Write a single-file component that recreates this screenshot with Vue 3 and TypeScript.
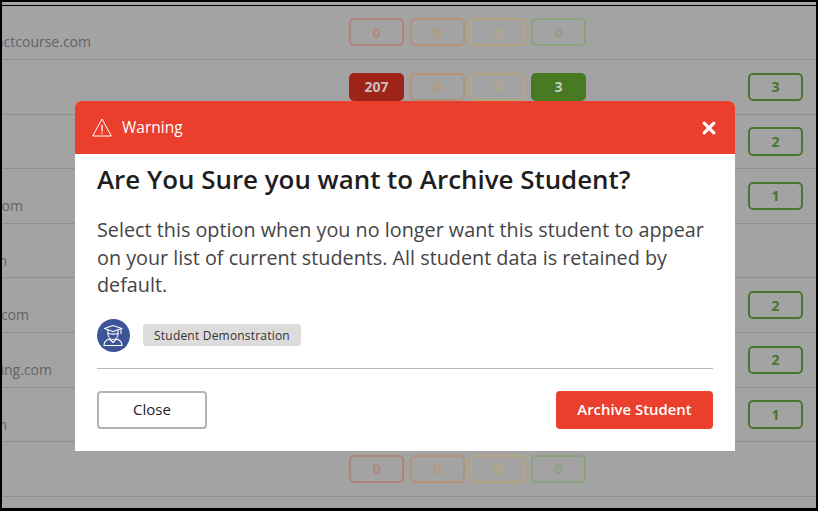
<script setup lang="ts">
interface Row {
  email: string
  emailEnd: number
  counts: number[]
  total: number | null
}

const COLUMN_RIGHT = 347

const rows: Row[] = [
  { email: 'student@exactcourse.com', emailEnd: 89, counts: [0, 0, 0, 0], total: null },
  { email: '', emailEnd: 0, counts: [207, 0, 0, 3], total: 3 },
  { email: '', emailEnd: 0, counts: [], total: 2 },
  { email: 'student@example.com', emailEnd: 21, counts: [], total: 1 },
  { email: 'student@example.mn', emailEnd: 5, counts: [], total: null },
  { email: 'student@example.com', emailEnd: 27, counts: [], total: 2 },
  { email: 'student@marketing.com', emailEnd: 50, counts: [], total: 2 },
  { email: 'student@example.mn', emailEnd: 5, counts: [], total: 1 },
  { email: '', emailEnd: 0, counts: [0, 0, 0, 0], total: null },
  { email: '', emailEnd: 0, counts: [], total: null },
]
const tones = ['red', 'orange', 'yellow', 'green']

function emailInset(row: Row): string {
  return `${COLUMN_RIGHT - row.emailEnd}px`
}
</script>

<template>
  <div class="frame">
    <div class="edge"></div>
    <div class="table">
      <div v-for="(row, i) in rows" :key="i" class="row">
        <div class="email" :style="{ paddingRight: emailInset(row) }">
          <span>{{ row.email }}</span>
        </div>
        <div class="counts">
          <span
            v-for="(c, j) in row.counts"
            :key="j"
            class="pill"
            :class="[tones[j], { filled: c > 0 }]"
          >{{ c }}</span>
        </div>
        <div class="total">
          <span v-if="row.total !== null" class="pill total-pill">{{ row.total }}</span>
        </div>
      </div>
    </div>
    <div class="modal">
      <div class="modal-head">
        <svg class="warn" viewBox="0 0 20 19" width="20" height="19" fill="none" stroke="#fff" stroke-width="1" stroke-linejoin="round">
          <path d="M10 1 19.300 18H.7Z" />
          <path d="M10 7v6.500" stroke-width="1.300" />
          <path d="M10 14.800v1.300" stroke-width="1.300" />
        </svg>
        <span class="warn-label">Warning</span>
        <svg class="x" viewBox="0 0 14 14" width="14" height="14" stroke="#fff" stroke-width="3.200" stroke-linecap="round">
          <path d="M2.200 2.200 11.800 11.800M11.800 2.200 2.200 11.800" />
        </svg>
      </div>
      <div class="modal-body">
        <h2>Are You Sure you want to Archive Student?</h2>
        <p>Select this option when you no longer want this student to appear on your list of current students. All student data is retained by default.</p>
        <div class="student">
          <span class="avatar">
            <svg viewBox="0 0 33 33" width="33" height="33" fill="none" stroke="#fff" stroke-width="1.100" stroke-linejoin="round" stroke-linecap="round">
              <path d="M7.500 9.500 16 6.500l9 3-9 3Z" />
              <path d="M11 11v4c0 3.300 2.200 5.500 5 5.500s5-2.200 5-5.500v-4" />
              <path d="M11 14.500c3 .8 7 .8 10 0" />
              <path d="M24 10v4.500" />
              <path d="M12.500 20c-3.500 1-5.500 2.700-5.500 6.500h18c0-3.800-2-5.500-5.500-6.500L16 23.500Z" />
            </svg>
          </span>
          <span class="tag">Student Demonstration</span>
        </div>
        <div class="divider"></div>
        <div class="actions">
          <button class="btn close">Close</button>
          <button class="btn archive">Archive Student</button>
        </div>
      </div>
    </div>
  </div>
</template>

<style>
html, body { margin: 0; background: #000; overflow: hidden; }
</style>

<style scoped>
.frame {
  position: relative;
  width: 814px;
  height: 506px;
  margin: 2px 0 0 2px;
  background: #a3a3a3;
  overflow: hidden;
  font-family: "Open Sans", "Noto Sans", sans-serif;
}
.edge { height: 3px; border-bottom: 1px solid #000; }
.table { display: flex; flex-direction: column; margin-top: -0.6px; }
.row {
  display: flex;
  align-items: center;
  flex: none;
  box-sizing: border-box;
  height: 54.6px;
  border-bottom: 1px solid #8f8f8f;
}
.email {
  box-sizing: border-box;
  display: flex;
  justify-content: flex-end;
  flex: none;
  width: 347px;
  height: 100%;
  padding-top: 27px;
  overflow: hidden;
  font-size: 14px;
  line-height: 20px;
  color: #646464;
  white-space: nowrap;
}
.email span { flex: none; }
.counts { display: flex; gap: 5.67px; flex: none; width: 399px; height: 28.5px; }
.pill {
  box-sizing: border-box;
  display: flex;
  align-items: center;
  justify-content: center;
  width: 55px;
  height: 28.5px;
  border: 2px solid;
  border-radius: 5px;
  font-size: 14px;
  font-weight: 700;
}
.red { border-color: #b0837c; color: #b08880; }
.orange { border-color: #b49274; color: #b49a7c; }
.yellow { border-color: #b5a67c; color: #b5a984; }
.green { border-color: #8aa37c; color: #8ca284; }
.red.filled { background: #9e2419; border-color: #9e2419; color: #c9c0be; }
.green.filled { background: #477a22; border-color: #477a22; color: #c5ccc0; }
.total { height: 28.5px; }
.total-pill { border-color: #4a7530; color: #4a7530; }

.modal {
  position: absolute;
  left: 73px;
  top: 99px;
  width: 660px;
  background: #fff;
  border-radius: 6px 6px 0 0;
  overflow: hidden;
}
.modal-head {
  display: flex;
  align-items: center;
  height: 53px;
  padding: 0 19px 0 17px;
  background: #ea3f2c;
  color: #fff;
}
.warn { flex: none; margin-right: 10px; }
.warn-label { padding-bottom: 1px; font-size: 15.500px; font-weight: 500; }
.x { margin-left: auto; }
.modal-body { padding: 8px 22px 22px; }
h2 {
  margin: 0;
  font-size: 25.9px;
  line-height: 34px;
  font-weight: 600;
  color: #1e1e1e;
}
p {
  margin: 20px 0 0;
  font-size: 19.8px;
  line-height: 27.6px;
  color: #454545;
}
.student { display: flex; align-items: center; gap: 13px; margin-top: 20px; }
.avatar {
  display: flex;
  width: 33px;
  height: 33px;
  border-radius: 50%;
  background: #3d5597;
}
.tag {
  box-sizing: border-box;
  display: flex;
  align-items: center;
  width: 158px;
  height: 22px;
  justify-content: center;
  border-radius: 3px;
  background: #dcdcdc;
  font-size: 12px;
  letter-spacing: 0.2px;
  color: #333;
}
.divider { height: 1px; margin-top: 16px; background: #b9b9b9; }
.actions { display: flex; justify-content: space-between; margin-top: 22px; }
.btn {
  box-sizing: border-box;
  height: 38px;
  padding: 0 0 2px;
  border-radius: 4px;
  font-family: inherit;
  font-size: 15px;
}
.close { width: 110px; background: #fff; border: 2px solid #b3b3b3; color: #222; }
.archive { width: 157px; background: #ea3f2c; border: none; color: #fff; font-size: 14.9px; font-weight: 600; }
</style>
